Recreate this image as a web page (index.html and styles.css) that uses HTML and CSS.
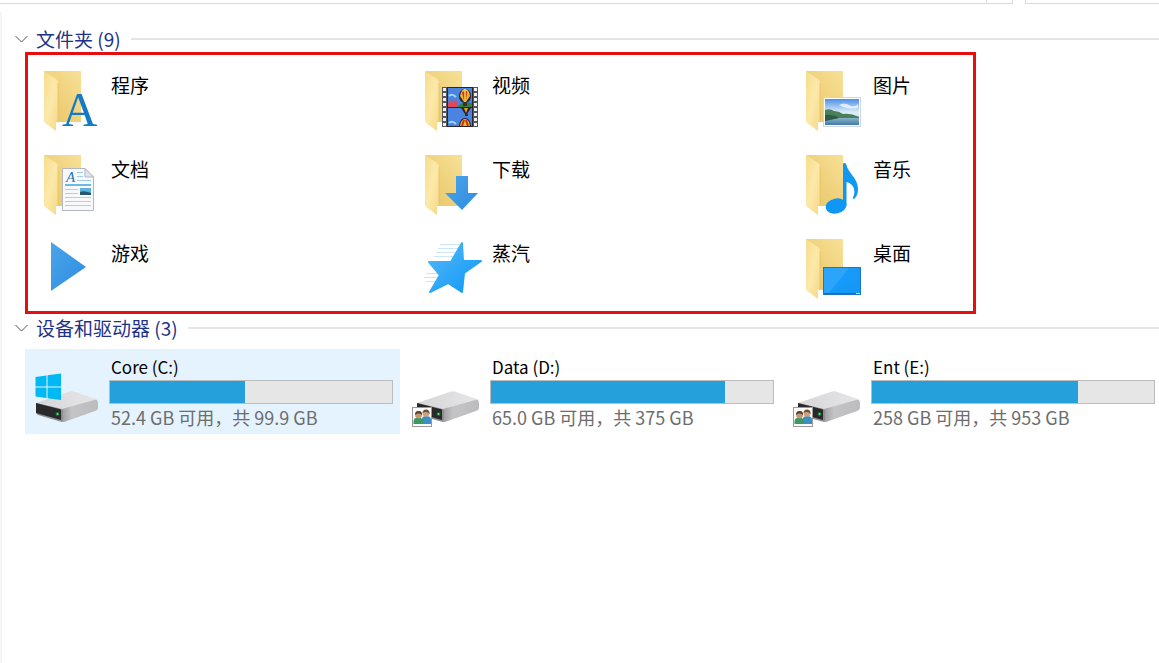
FILE: index.html
```
<!DOCTYPE html>
<html lang="zh-CN">
<head>
    <meta charset="UTF-8">
    <meta name="viewport" content="width=device-width, initial-scale=1.0">
    <title>此电脑</title>
    <link rel="stylesheet" href="styles.css">
</head>
<body>

<!-- shared shapes -->
<svg class="defs" width="0" height="0" aria-hidden="true">
    <defs>
        <linearGradient id="folderBack" x1="0" y1="1" x2="1" y2="0">
            <stop offset="0" stop-color="#e8c566"/>
            <stop offset="0.5" stop-color="#f0d27c"/>
            <stop offset="1" stop-color="#f7e097"/>
        </linearGradient>
        <linearGradient id="folderFlap" x1="0" y1="0" x2="1" y2="1">
            <stop offset="0" stop-color="#f6dd8c"/>
            <stop offset="0.5" stop-color="#fce9aa"/>
            <stop offset="1" stop-color="#f5d884"/>
        </linearGradient>
        <linearGradient id="blue" x1="0" y1="0" x2="1" y2="1">
            <stop offset="0" stop-color="#4aa5ea"/>
            <stop offset="1" stop-color="#2e8ce0"/>
        </linearGradient>
        <linearGradient id="starFill" x1="0" y1="0" x2="1" y2="1">
            <stop offset="0" stop-color="#58b9f5"/>
            <stop offset="1" stop-color="#0a97fa"/>
        </linearGradient>
        <linearGradient id="desktopFill" x1="0" y1="0" x2="1" y2="1">
            <stop offset="0" stop-color="#1b9dfa"/>
            <stop offset="1" stop-color="#1496f5"/>
        </linearGradient>
        <linearGradient id="sky" x1="0" y1="0" x2="0" y2="1">
            <stop offset="0" stop-color="#4c8fe6"/>
            <stop offset="0.5" stop-color="#d8ecfa"/>
        </linearGradient>
        <linearGradient id="sea" x1="0" y1="0" x2="0" y2="1">
            <stop offset="0" stop-color="#9cc6d8"/>
            <stop offset="1" stop-color="#4478a4"/>
        </linearGradient>
        <linearGradient id="driveTop" x1="0" y1="0" x2="1" y2="0">
            <stop offset="0" stop-color="#d6d6d8"/>
            <stop offset="1" stop-color="#e6e6e8"/>
        </linearGradient>
        <linearGradient id="driveSide" x1="0" y1="0" x2="1" y2="0">
            <stop offset="0" stop-color="#9c9c9e"/>
            <stop offset="0.3" stop-color="#c4c4c6"/>
            <stop offset="1" stop-color="#bcbcbe"/>
        </linearGradient>

        <symbol id="folder" viewBox="0 0 84 84">
            <path d="M19 11H56V62H31Z" fill="url(#folderBack)"/>
            <path d="M19 11L31 19Q33 20 33 23V60L31 62V71L20 63Q19 62 19 60Z" fill="url(#folderFlap)"/>
            <path d="M33 23V60" stroke="#dcb95f" stroke-width="1" opacity="0.5"/>
        </symbol>

        <symbol id="balloon" viewBox="0 0 24 19">
            <rect width="24" height="19" fill="#4a84e0"/>
            <path d="M1 8Q4 5 8 9" fill="none" stroke="#9adbe8" stroke-width="2"/>
            <path d="M0 19V15L3 12L5 15L7 11L10 15V19Z" fill="#e2485c"/>
            <path d="M9 19Q14 13 24 15V19Z" fill="#35803c"/>
            <ellipse cx="17" cy="8" rx="6" ry="7" fill="#26242e"/>
            <path d="M12 8Q14 0 17 1Q21 1 22 8L18 14H16Z" fill="#f1b72a"/>
            <path d="M14 4Q15 11 17 14Q19 10 19 3" fill="#c8321f"/>
            <path d="M17 1V14" stroke="#f6d64a" stroke-width="1.5"/>
            <rect x="15" y="15" width="4" height="3" fill="#452a20"/>
        </symbol>

        <symbol id="drive" viewBox="0 0 84 84">
            <path d="M11 54L45 42.500Q47 42 49 42.500L71 50Q73 51 72 53L37 61Z" fill="url(#driveTop)"/>
            <path d="M37 60L71 50.500Q73 51 73 54V59Q73 61 70 62L39 73H36Z" fill="url(#driveSide)"/>
            <path d="M11 54L35 59.500Q38 60 38 63V70Q38 73 35 72.500L13 66Q11 65 11 63Z" fill="#8d8d90"/>
            <path d="M11 54L36 60.500V71L11 64Z" fill="#29292b"/>
            <circle cx="32.500" cy="65" r="2" fill="#146a28"/>
            <circle cx="32.500" cy="65" r="1" fill="#5ff07a"/>
        </symbol>

        <symbol id="shared" viewBox="0 0 20 20">
            <rect x="0.500" y="0.500" width="19" height="19" fill="#fbfbfb" stroke="#9a9a9a"/>
            <path d="M10 17V12Q10 9 14 9Q19 9 19 13V17Z" fill="#3a8fc4"/>
            <circle cx="14" cy="6.500" r="3.300" fill="#d0a07c"/>
            <path d="M10.500 6Q11 2 14.500 2.500Q18 3 17.500 7Q16 4.500 13 5Z" fill="#6a5138"/>
            <path d="M1.500 17V14Q2 10.500 6 10.500Q11 10.500 11 14V17Z" fill="#3b9a62"/>
            <circle cx="6.500" cy="8" r="3.400" fill="#c99670"/>
            <path d="M3 8Q3 3.500 7 4Q10.500 4 10 8.500Q9 6 5.500 6.500Z" fill="#55422e"/>
        </symbol>
    </defs>
</svg>

<div class="toolbar">
    <div class="address"></div>
    <div class="refresh"></div>
    <div class="search"></div>
</div>

<main>
    <section>
        <h2>
            <svg class="chevron" viewBox="0 0 13 8"><path d="M0.500 1L6.500 7L12.500 1"/></svg>
            文件夹 (9)
        </h2>
        <div class="grid folders">
            <a class="tile" href="#">
                <svg class="icon" viewBox="0 0 84 84">
                    <use href="#folder"/>
                    <text class="glyph-a" x="37" y="66">A</text>
                </svg>
                <span class="label">程序</span>
            </a>
            <a class="tile" href="#">
                <svg class="icon" viewBox="0 0 84 84">
                    <use href="#folder"/>
                    <rect x="36" y="27" width="36" height="40" fill="#55565c"/>
                    <path d="M38.500 28V67M69.500 28V67" stroke="#eef0f2" stroke-width="3" stroke-dasharray="3 2"/>
                    <rect x="41" y="27" width="26" height="40" fill="#26262c"/>
                    <use href="#balloon" x="42" y="28" width="24" height="19"/>
                    <svg x="42" y="48" width="24" height="18" viewBox="0 0 24 18">
                        <rect width="24" height="18" fill="#4a84e0"/>
                        <path d="M13 0H23L19 6H17Z" fill="#2b2530"/>
                        <path d="M16 0H20L18 5Z" fill="#e0a52a"/>
                        <rect x="17" y="6" width="3" height="2" fill="#452a20"/>
                        <path d="M1 15Q4 12 8 16" fill="none" stroke="#9adbe8" stroke-width="2"/>
                        <path d="M11 18Q12 10 17 10Q22 10 23 18Z" fill="#26242e"/>
                        <path d="M12 18Q13 11 17 11Q21 11 22 18Z" fill="#f1b72a"/>
                        <path d="M14 18L16 12M20 18L18 12" stroke="#c8321f" stroke-width="2"/>
                    </svg>
                </svg>
                <span class="label">视频</span>
            </a>
            <a class="tile" href="#">
                <svg class="icon" viewBox="0 0 84 84">
                    <use href="#folder"/>
                    <rect x="36.500" y="37.500" width="37" height="29" fill="#fff" stroke="#cfd7de"/>
                    <rect x="38" y="39" width="34" height="26" fill="url(#sky)"/>
                    <path d="M52 45Q57 42 62 45T71 44V48Q60 50 52 45Z" fill="#fff" opacity="0.7"/>
                    <rect x="38" y="56" width="34" height="9" fill="url(#sea)"/>
                    <path d="M38 50Q43 48 47 51Q52 51 56 54Q64 53 72 57V58H52L38 61Z" fill="#4a7f58"/>
                    <path d="M38 55Q46 54 52 58L38 61Z" fill="#2f5c48"/>
                </svg>
                <span class="label">图片</span>
            </a>
            <a class="tile" href="#">
                <svg class="icon" viewBox="0 0 84 84">
                    <use href="#folder"/>
                    <path d="M37.500 24.500H60L68.500 33V66.500H37.500Z" fill="#f7f9fb" stroke="#b3b8c0"/>
                    <path d="M60 24.500V33H68.500Z" fill="#e1e5ea" stroke="#b3b8c0"/>
                    <path d="M52 28.500H58M52 32.500H58M52 36.500H66" stroke="#9fcbe8"/>
                    <path d="M40 41H66" stroke="#6fb8e2" stroke-width="2"/>
                    <path d="M40 45.500H53M40 49.500H53M40 53.500H66M40 57.500H66M40 61.500H66" stroke="#c5c9d0"/>
                    <rect x="55" y="44" width="11" height="7" fill="#5db1dd"/>
                    <path d="M55 48Q59 46 66 49V51H55Z" fill="#24586b"/>
                    <text class="glyph-doc" x="41" y="38">A</text>
                </svg>
                <span class="label">文档</span>
            </a>
            <a class="tile" href="#">
                <svg class="icon" viewBox="0 0 84 84">
                    <use href="#folder"/>
                    <path d="M50 32H62V49H72L56 66L39 49H50Z" fill="url(#blue)"/>
                </svg>
                <span class="label">下载</span>
            </a>
            <a class="tile" href="#">
                <svg class="icon" viewBox="0 0 84 84">
                    <use href="#folder"/>
                    <ellipse cx="49" cy="62" rx="10.500" ry="7.500" transform="rotate(-12 49 62)" fill="#0f97f5"/>
                    <path d="M56 20Q56 19 57.500 19Q59 19 59.500 21C61 29 71 34 71 45Q71 52 67 55L65.500 54.500C70 47 66 39 59.500 38V62H56Z" fill="#0f97f5"/>
                </svg>
                <span class="label">音乐</span>
            </a>
            <a class="tile" href="#">
                <svg class="icon" viewBox="0 0 84 84">
                    <path d="M26 14L61 39L26 63Z" fill="url(#blue)"/>
                </svg>
                <span class="label">游戏</span>
            </a>
            <a class="tile" href="#">
                <svg class="icon" viewBox="0 0 84 84">
                    <path d="M34 16.500H54M32 20.500H52M30 24.500H50M28 28.500H48M20 45.500H35M18 49.500H33M20 53.500H31" stroke="#cde6f6"/>
                    <path d="M56 15L57 33H75L58 45L56 64L42 55L24 64L34 47L23 34H45Z" fill="url(#starFill)" stroke="url(#starFill)" stroke-width="2" stroke-linejoin="round"/>
                </svg>
                <span class="label">蒸汽</span>
            </a>
            <a class="tile" href="#">
                <svg class="icon" viewBox="0 0 84 84">
                    <use href="#folder"/>
                    <rect x="36.500" y="39.500" width="37" height="27" fill="url(#desktopFill)" stroke="#1c78be"/>
                    <path d="M37 40H62L41 66H37Z" fill="#2ba5fb"/>
                    <path d="M37 65.500H73" stroke="#1273b8"/>
                    <path d="M69 65.500H73" stroke="#bfe2f8"/>
                </svg>
                <span class="label">桌面</span>
            </a>
            <div class="highlight"></div>
        </div>
    </section>

    <section>
        <h2>
            <svg class="chevron" viewBox="0 0 13 8"><path d="M0.500 1L6.500 7L12.500 1"/></svg>
            设备和驱动器 (3)
        </h2>
        <div class="grid">
            <a class="tile drive selected" href="#">
                <svg class="icon" viewBox="0 0 84 84">
                    <use href="#drive"/>
                    <path d="M10.500 28L21.500 26.500V37.500H10.500ZM22.500 26.300L36 24.500V37.500H22.500ZM10.500 38.500H21.500V49L10.500 47.500ZM22.500 38.500H36V51L22.500 49.200Z" fill="#00b9f2"/>
                </svg>
                <div class="info">
                    <label class="name" for="driveC">Core (C:)</label>
                    <progress id="driveC" value="48" max="100"></progress>
                    <span class="space">52.4 GB 可用，共 99.9 GB</span>
                </div>
            </a>
            <a class="tile drive" href="#">
                <svg class="icon" viewBox="0 0 84 84">
                    <use href="#drive"/>
                    <use href="#shared" x="6" y="58" width="20" height="20"/>
                </svg>
                <div class="info">
                    <label class="name" for="driveD">Data (D:)</label>
                    <progress id="driveD" value="83" max="100"></progress>
                    <span class="space">65.0 GB 可用，共 375 GB</span>
                </div>
            </a>
            <a class="tile drive" href="#">
                <svg class="icon" viewBox="0 0 84 84">
                    <use href="#drive"/>
                    <use href="#shared" x="6" y="58" width="20" height="20"/>
                </svg>
                <div class="info">
                    <label class="name" for="driveE">Ent (E:)</label>
                    <progress id="driveE" value="73" max="100"></progress>
                    <span class="space">258 GB 可用，共 953 GB</span>
                </div>
            </a>
        </div>
    </section>
</main>

</body>
</html>
```
FILE: styles.css
```
* {
    box-sizing: border-box;
}
body {
    margin: 0;
    font-family: "Noto Sans CJK SC", sans-serif;
    font-size: 19px;
    color: #000;
    background-color: #fff;
    overflow-x: hidden;
}
.defs {
    position: absolute;
}
.toolbar {
    display: flex;
    height: 4px;
}
.toolbar div {
    border-bottom: 1px solid #d9d9d9;
}
.address {
    flex: 1;
}
.toolbar .refresh {
    width: 27px;
    border-left: 1px solid #d9d9d9;
    border-right: 1px solid #d9d9d9;
}
.toolbar .search {
    width: 134px;
    margin-left: 12px;
    border-left: 1px solid #d9d9d9;
}
main {
    min-height: calc(100vh - 12px);
    margin-top: 8px;
    padding-top: 11px;
    border-left: 2px solid #f5f5f5;
}
h2 {
    display: flex;
    align-items: center;
    height: 37px;
    margin: 0;
    padding: 0 0 5px 13px;
    font-size: 19px;
    font-weight: normal;
    line-height: 28px;
    color: #1e3287;
}
h2::after {
    content: "";
    flex: 1;
    height: 2px;
    margin-left: 10px;
    background-color: #e5e5e5;
}
.chevron {
    width: 13px;
    height: 8px;
    margin-right: 8px;
    fill: none;
    stroke: #555;
}
.grid {
    position: relative;
    display: grid;
    grid-template-columns: repeat(3, 1fr);
    column-gap: 6px;
    margin-left: 23px;
    margin-right: -3px;
}
.tile {
    display: flex;
    min-height: 84px;
    color: inherit;
    text-decoration: none;
}
.icon {
    flex: none;
    width: 84px;
    height: 84px;
}
.label {
    padding: 11px 0 0 2px;
    line-height: 28px;
}
.glyph-a {
    font-family: "Liberation Serif", serif;
    font-size: 49px;
    fill: #147ac6;
}
.glyph-doc {
    font-family: "Liberation Serif", serif;
    font-size: 15px;
    font-style: italic;
    fill: #1f78b8;
}
/* red frame drawn over the folder list */
.highlight {
    position: absolute;
    top: -8px;
    bottom: -2px;
    left: 0;
    right: 186px;
    border: 3px solid #e60f0f;
    pointer-events: none;
}
.drive {
    min-height: 85px;
}
.selected {
    background-color: #e5f3fe;
}
.info {
    flex: 1;
    display: flex;
    flex-direction: column;
    padding: 4px 7px 0 0;
}
.name,
.space {
    padding-left: 2px;
    line-height: 27px;
}
.name {
    font-size: 17px;
}
.space {
    font-size: 18px;
    color: #6d6d6d;
}
progress {
    appearance: none;
    width: 100%;
    height: 24px;
    border: 1px solid #bcbcbc;
    background-color: #e6e6e6;
}
progress::-webkit-progress-bar {
    background-color: #e6e6e6;
}
progress::-webkit-progress-value {
    background-color: #26a0da;
}
```
